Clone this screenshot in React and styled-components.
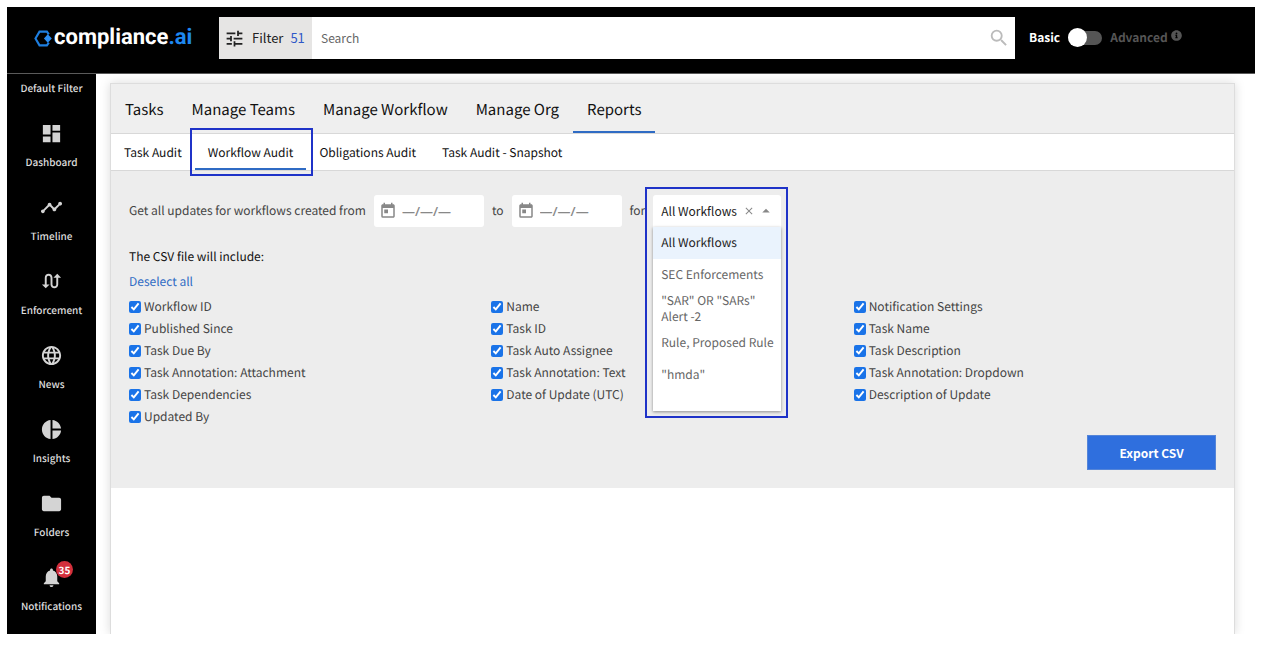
import React, { useState } from "react";
import styled, { createGlobalStyle } from "styled-components";
import {
  MdDashboard,
  MdTimeline,
  MdSwapCalls,
  MdLanguage,
  MdPieChart,
  MdFolder,
  MdNotifications,
  MdTune,
  MdSearch,
  MdToday,
  MdClose,
  MdArrowDropUp,
} from "react-icons/md";
import { FaInfoCircle } from "react-icons/fa";

const GlobalStyle = createGlobalStyle`
  * {
    box-sizing: border-box;
  }

  body {
    margin: 0;
    background: #fff;
    text-rendering: geometricPrecision;
  }

  body, button, input, select {
    font-family: "Noto Sans CJK SC", "Noto Sans", sans-serif;
    font-size: 12px;
    line-height: 16px;
  }
`;

const Page = styled.div`
  min-height: 100vh;
  padding: 7px 7px 12px;
  display: flex;
  flex-direction: column;
`;

const Header = styled.header`
  display: flex;
  align-items: center;
  height: 67px;
  padding-bottom: 4px;
  background: #000;
  border-bottom: 1px solid #5a5a5a;
`;

const Logo = styled.a`
  flex: 0 0 212px;
  display: flex;
  align-items: center;
  gap: 2px;
  padding-left: 27px;
  color: #fff;
  font-family: Roboto, sans-serif;
  font-size: 22px;
  font-weight: 700;
  line-height: 28px;
  text-decoration: none;
`;

const LogoAccent = styled.span`
  color: #1e88f0;
`;

const SearchBar = styled.form`
  flex: 1;
  display: flex;
  align-items: center;
  height: 42px;
  padding-right: 5px;
  background: #fff;
`;

const FilterButton = styled.button`
  display: flex;
  align-items: center;
  align-self: stretch;
  gap: 7px;
  width: 93px;
  padding: 0 0 0 5px;
  border: none;
  background: #e6e5e4;
  color: #222;
  font-size: 13px;
  white-space: nowrap;
  cursor: pointer;
`;

const FilterCount = styled.span`
  color: #3058c8;
`;

const SearchInput = styled.input`
  flex: 1;
  min-width: 0;
  padding: 0 9px;
  border: none;
  outline: none;
  background: transparent;

  &::placeholder {
    color: #666;
    opacity: 1;
  }
`;

const SearchButton = styled.button`
  display: flex;
  padding: 0;
  border: none;
  background: none;
  color: #bbb;
  cursor: pointer;
`;

const ModeSwitch = styled.div`
  flex: 0 0 240px;
  display: flex;
  align-items: center;
  gap: 8px;
  padding-left: 14px;
  font-weight: 700;
`;

const ModeLabel = styled.label`
  display: flex;
  gap: 3px;
  color: ${(props) => (props.$active ? "#fff" : "#555")};
`;

const Toggle = styled.input`
  appearance: none;
  position: relative;
  width: 34px;
  height: 14px;
  margin: 0;
  border-radius: 7px;
  background: #555;
  cursor: pointer;

  &::after {
    content: "";
    position: absolute;
    top: -3px;
    left: ${(props) => (props.checked ? "15px" : "0")};
    width: 19px;
    height: 19px;
    border-radius: 50%;
    background: #fff;
  }
`;

const Body = styled.div`
  flex: 1;
  display: flex;
`;

const Sidebar = styled.nav`
  flex: 0 0 89px;
  background: #000;
  color: #ddd;
  font-size: 10px;
  font-weight: 500;
  text-align: center;
`;

const SidebarTitle = styled.div`
  padding-top: 6px;
  margin-bottom: 22px;
`;

const SidebarLink = styled.a`
  display: flex;
  flex-direction: column;
  align-items: center;
  gap: 9px;
  height: 74px;
  padding-top: 4px;
  color: inherit;
  text-decoration: none;

  &:last-child {
    height: 70px;
  }
`;

const IconWrap = styled.span`
  position: relative;
  display: flex;
  color: #d4d4d4;
`;

const Badge = styled.span`
  position: absolute;
  top: -5px;
  right: -10px;
  width: 17px;
  height: 17px;
  border-radius: 50%;
  background: #d3303c;
  color: #fff;
  font-weight: 700;
  line-height: 17px;
`;

const Content = styled.main`
  flex: 1;
  min-width: 0;
  display: flex;
  padding: 9px 20px 0 14px;
  overflow: hidden;
`;

const Panel = styled.section`
  flex: 1;
  min-width: 0;
  border: 1px solid #ddd;
  border-bottom: none;
  box-shadow: 0 0 10px rgba(0, 0, 0, 0.15);
`;

const Tab = styled.a`
  position: relative;
  display: flex;
  align-items: center;
  padding: 4px 14px 0;
  border-bottom: 2px solid ${(props) => (props.$active ? "#2f6bc4" : "transparent")};
  color: #111;
  text-decoration: none;
  white-space: nowrap;
`;

const TabRow = styled.nav`
  display: flex;
  height: 50px;
  border-bottom: 1px solid #d8d8d8;
  background: #efefef;
  font-size: 15px;
`;

const SubTabRow = styled(TabRow)`
  height: 37px;
  background: #fff;
  font-size: 12px;

  ${Tab} {
    padding: 4px 13px 0;
  }
`;

const Highlight = styled.span`
  position: absolute;
  inset: ${(props) => props.$inset};
  border: 2px solid #1f33c8;
  pointer-events: none;
`;

const Report = styled.form`
  padding: 24px 18px 18px;
  background: #ededed;
  color: #444;
`;

const RangeRow = styled.div`
  display: flex;
  align-items: center;
  gap: 8px;
`;

const DateBox = styled.label`
  display: flex;
  align-items: center;
  gap: 5px;
  width: 110px;
  height: 32px;
  padding: 0 5px;
  border-radius: 3px;
  background: #fff;
  color: #888;
`;

const DateInput = styled.input`
  flex: 1;
  min-width: 0;
  padding: 0;
  border: none;
  outline: none;
  background: transparent;
  font-family: "Open Sans", sans-serif;
  font-size: 13px;
  font-weight: 600;

  &::placeholder {
    color: #888;
    opacity: 1;
  }
`;

const Dropdown = styled.div`
  position: relative;
  width: 128px;
`;

const Select = styled.select`
  appearance: none;
  display: block;
  width: 100%;
  height: 32px;
  padding: 0 40px 0 8px;
  border: none;
  border-radius: 3px 3px 0 0;
  outline: none;
  background: #fff;
  color: #222;
`;

const DropdownIcons = styled.span`
  position: absolute;
  top: 0;
  right: 6px;
  display: flex;
  align-items: center;
  gap: 2px;
  height: 32px;
  color: #888;
  pointer-events: none;
`;

const ClearButton = styled.button`
  display: flex;
  padding: 0;
  border: none;
  background: none;
  color: inherit;
  pointer-events: auto;
  cursor: pointer;
`;

const Menu = styled.ul`
  position: absolute;
  top: 32px;
  left: 0;
  right: 0;
  margin: 0;
  padding: 0 0 20px;
  background: #fff;
  box-shadow: 0 1px 3px rgba(0, 0, 0, 0.4);
  list-style: none;
`;

const Option = styled.li`
  display: flex;
  align-items: center;
  min-height: 32px;
  padding: 2px 4px 2px 8px;
  background: ${(props) => (props.$selected ? "#eaf3fd" : "transparent")};
  color: ${(props) => (props.$selected ? "#222" : "#666")};
  cursor: pointer;
`;

const ReportTitle = styled.h2`
  margin: 18px 0 0;
  color: #111;
  font-size: 12px;
  font-weight: 400;
  line-height: 24px;
`;

const TextLink = styled.a`
  display: inline-block;
  margin: 2px 0 3px;
  color: #2f6bc4;
  line-height: 22px;
  text-decoration: none;
`;

const FieldGrid = styled.div`
  display: grid;
  grid-template-columns: repeat(3, 1fr);
`;

const Field = styled.label`
  display: flex;
  align-items: center;
  gap: 3px;
  height: 22px;
`;

const Checkbox = styled.input`
  width: 12px;
  height: 12px;
  margin: 0;
  accent-color: #1a73e8;
`;

const Actions = styled.div`
  display: flex;
  justify-content: flex-end;
  margin-top: 7px;
`;

const ExportButton = styled.button`
  width: 129px;
  height: 35px;
  border: 1px solid #5585d8;
  background: #2f6fde;
  color: #fff;
  font-weight: 700;
  cursor: pointer;
`;

const links = [
  { label: "Dashboard", icon: MdDashboard },
  { label: "Timeline", icon: MdTimeline },
  { label: "Enforcement", icon: MdSwapCalls },
  { label: "News", icon: MdLanguage },
  { label: "Insights", icon: MdPieChart },
  { label: "Folders", icon: MdFolder },
  { label: "Notifications", icon: MdNotifications, count: 35 },
];

const tabs = ["Tasks", "Manage Teams", "Manage Workflow", "Manage Org", "Reports"];

const subTabs = ["Task Audit", "Workflow Audit", "Obligations Audit", "Task Audit - Snapshot"];

const workflows = [
  "All Workflows",
  "SEC Enforcements",
  '"SAR" OR "SARs" Alert -2',
  "Rule, Proposed Rule",
  '"hmda"',
];

const fields = [
  "Workflow ID",
  "Name",
  "Notification Settings",
  "Published Since",
  "Task ID",
  "Task Name",
  "Task Due By",
  "Task Auto Assignee",
  "Task Description",
  "Task Annotation: Attachment",
  "Task Annotation: Text",
  "Task Annotation: Dropdown",
  "Task Dependencies",
  "Date of Update (UTC)",
  "Description of Update",
  "Updated By",
];

const LogoMark = () => (
  <svg width="18" height="17" viewBox="0 0 17 16" aria-hidden="true">
    <path
      d="M14 4 12.2 1.5H5.2L1.4 8l3.8 6.5h7L14 12"
      fill="none"
      stroke="#1e7fe0"
      strokeWidth="2"
    />
    <path d="M13 4 16.8 8 13 12 9.4 8z" fill="#2b8ff5" />
  </svg>
);

const App = () => {
  const [advanced, setAdvanced] = useState(false);
  const [workflow, setWorkflow] = useState(workflows[0]);
  const [selected, setSelected] = useState(fields);

  const toggleField = (name) => {
    setSelected((prev) =>
      prev.includes(name) ? prev.filter((f) => f !== name) : [...prev, name]
    );
  };

  const handleDeselect = (e) => {
    e.preventDefault();
    setSelected([]);
  };

  return (
    <Page>
      <GlobalStyle />
      <Header>
        <Logo href="#">
          <LogoMark />
          <span>
            compliance<LogoAccent>.ai</LogoAccent>
          </span>
        </Logo>
        <SearchBar onSubmit={(e) => e.preventDefault()}>
          <FilterButton type="button">
            <MdTune size={21} />
            Filter
            <FilterCount>51</FilterCount>
          </FilterButton>
          <SearchInput type="text" placeholder="Search" aria-label="Search" />
          <SearchButton type="submit" aria-label="Submit search">
            <MdSearch size={22} />
          </SearchButton>
        </SearchBar>
        <ModeSwitch>
          <ModeLabel htmlFor="mode" $active={!advanced}>
            Basic
          </ModeLabel>
          <Toggle
            id="mode"
            type="checkbox"
            role="switch"
            checked={advanced}
            onChange={(e) => setAdvanced(e.target.checked)}
          />
          <ModeLabel htmlFor="mode" $active={advanced}>
            Advanced
            <FaInfoCircle size={11} />
          </ModeLabel>
        </ModeSwitch>
      </Header>

      <Body>
        <Sidebar>
          <SidebarTitle>Default Filter</SidebarTitle>
          {links.map(({ label, icon: Icon, count }) => (
            <SidebarLink href="#" key={label}>
              <IconWrap>
                <Icon size={23} />
                {count && <Badge>{count}</Badge>}
              </IconWrap>
              {label}
            </SidebarLink>
          ))}
        </Sidebar>

        <Content>
          <Panel>
            <TabRow>
              {tabs.map((name) => (
                <Tab href="#" key={name} $active={name === "Reports"}>
                  {name}
                </Tab>
              ))}
            </TabRow>
            <SubTabRow>
              {subTabs.map((name) => (
                <Tab href="#" key={name} $active={name === "Workflow Audit"}>
                  {name}
                  {name === "Workflow Audit" && <Highlight $inset="-6px -7px -8px -5px" />}
                </Tab>
              ))}
            </SubTabRow>

            <Report onSubmit={(e) => e.preventDefault()}>
              <RangeRow>
                <span>Get all updates for workflows created from</span>
                <DateBox>
                  <MdToday size={18} />
                  <DateInput type="text" placeholder="—/—/—" aria-label="From date" />
                </DateBox>
                <span>to</span>
                <DateBox>
                  <MdToday size={18} />
                  <DateInput type="text" placeholder="—/—/—" aria-label="To date" />
                </DateBox>
                <label htmlFor="workflow">for</label>
                <Dropdown>
                  <Select
                    id="workflow"
                    value={workflow}
                    onChange={(e) => setWorkflow(e.target.value)}
                  >
                    {workflows.map((name) => (
                      <option key={name}>{name}</option>
                    ))}
                  </Select>
                  <DropdownIcons>
                    <ClearButton
                      type="button"
                      aria-label="Clear workflow"
                      onClick={() => setWorkflow(workflows[0])}
                    >
                      <MdClose size={12} />
                    </ClearButton>
                    <MdArrowDropUp size={18} />
                  </DropdownIcons>
                  <Menu role="listbox" aria-label="Workflows">
                    {workflows.map((name) => (
                      <Option
                        key={name}
                        role="option"
                        aria-selected={name === workflow}
                        $selected={name === workflow}
                        onClick={() => setWorkflow(name)}
                      >
                        {name}
                      </Option>
                    ))}
                  </Menu>
                  <Highlight $inset="-8px -7px -191px -8px" />
                </Dropdown>
              </RangeRow>

              <ReportTitle>The CSV file will include:</ReportTitle>
              <TextLink href="#" onClick={handleDeselect}>
                Deselect all
              </TextLink>
              <FieldGrid>
                {fields.map((name) => (
                  <Field key={name}>
                    <Checkbox
                      type="checkbox"
                      checked={selected.includes(name)}
                      onChange={() => toggleField(name)}
                    />
                    {name}
                  </Field>
                ))}
              </FieldGrid>
              <Actions>
                <ExportButton type="submit">Export CSV</ExportButton>
              </Actions>
            </Report>
          </Panel>
        </Content>
      </Body>
    </Page>
  );
};

export default App;
